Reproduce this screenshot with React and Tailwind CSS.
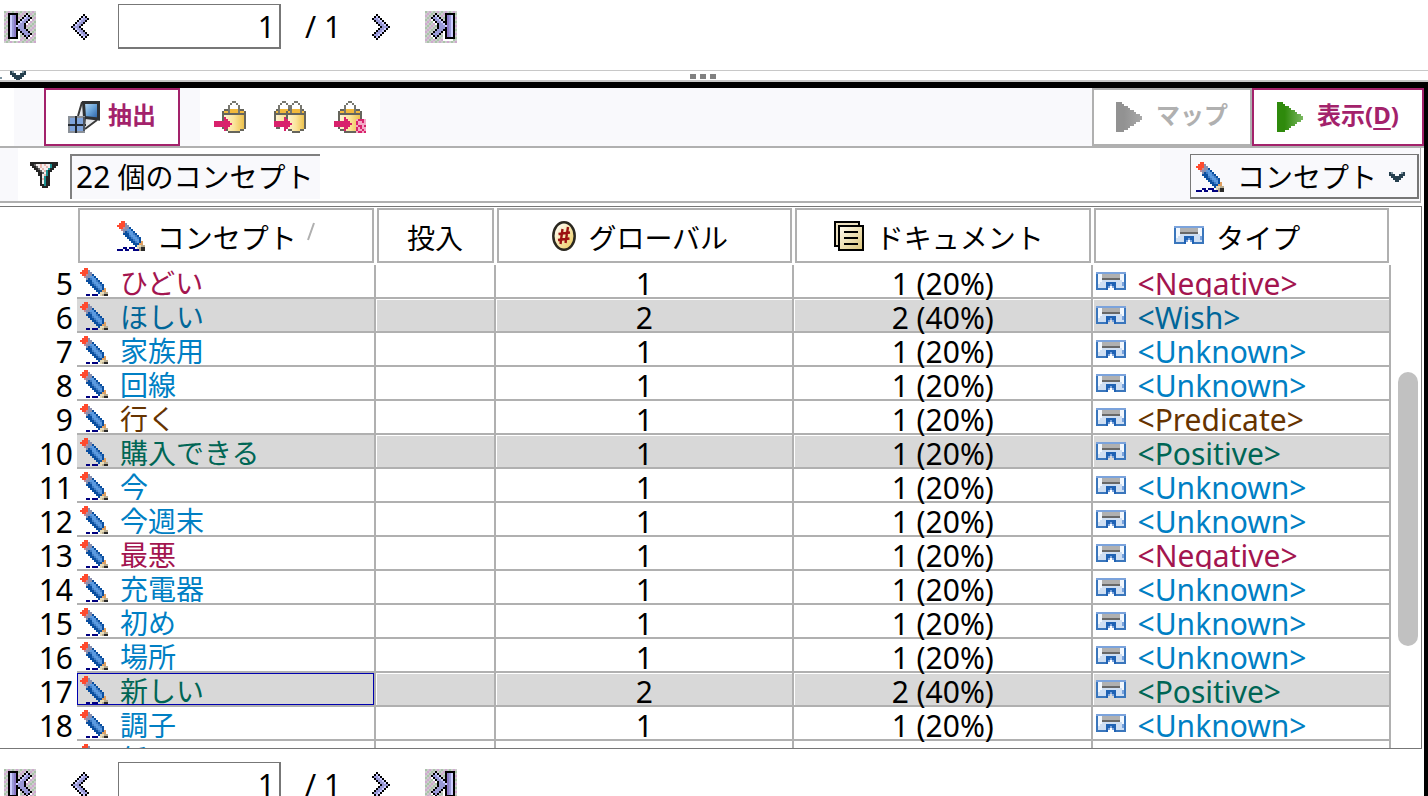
import React from "react";

const PALETTES = {
  nav: { "#": "#000000", l: "#ccccff", o: "#9999d6", d: "#8c7ac8", w: "#ffffff" },
  pencil: {
    r: "#ff4a2e", s: "#f57a5c", g: "#8890b0", h: "#c08a98", b: "#0a4fa0", l: "#5b9ae0", m: "#3f7cc4",
    o: "#e0a060", c: "#e8dcb8", y: "#b8ac90", k: "#2a2a2a", n: "#000080",
  },
  type: {
    m: "#7ba3dc", b: "#3a76bc", w: "#f2f7fd", l: "#cfdff3", g: "#b0b0b0", k: "#686868", d: "#1f62b4",
  },
  funnel: { k: "#242424", g: "#666666", w: "#f4eeee", p: "#e8b8b0", t: "#1a9090" },
  caret: { k: "#26404f", g: "#7d93a0" },
};

function PixelArt({ rows, palette, className }) {
  const colors = PALETTES[palette];
  const width = Math.max(...rows.map((r) => r.length));
  return (
    <svg
      viewBox={`0 0 ${width} ${rows.length}`}
      width={width * 2}
      height={rows.length * 2}
      className={className}
      shapeRendering="crispEdges"
      aria-hidden="true"
    >
      {rows.flatMap((row, y) =>
        [...row].map((c, x) =>
          colors[c] ? <rect key={`${x}-${y}`} x={x} y={y} width="1" height="1" fill={colors[c]} /> : null
        )
      )}
    </svg>
  );
}

const PENCIL = [
  "..rr..........",
  ".rrrg.........",
  "rrrrgg........",
  ".rrhggb.......",
  "..hggllb......",
  "...gbmllb.....",
  "...bbbllmb....",
  "....bbmllmb...",
  ".....bbmllmb..",
  "......bbmllb..",
  ".......bbmlbo.",
  "........bbboo.",
  ".........bccyy",
  "...nn.nnn.cykk",
  "nnn.nn..nnnykk",
];
const TYPE = [
  "mmmmmmmmmmmmmmm",
  "bwwgggggggggwwb",
  "bwwgggggggggwwb",
  "bwwkkkkkkkkkwwb",
  "bwwllllllllllwb",
  "bwllldddddlllmb",
  "bllllddmddlllmb",
  "blllldm.mdllllb",
  "bbbbbd...dbbbbb",
];
const FUNNEL = [
  "kkkkkkkkkkkkkk",
  "kkgwwpwpwwtkkk",
  ".kkgwpwwpwtkk.",
  "..kkgwpwwtkk..",
  "...kkgwptkk...",
  "....kkgwtk....",
  "....kkwptk....",
  ".....kwtkk....",
  ".....kptkk....",
  ".....kwtkk....",
  ".....kwtkk....",
  ".....kktkk....",
  "......kkk.....",
];
const CARET = ["kg....gk", "kkk..kkk", ".kkkkkk.", "..kkkk..", "...kk..."];
const LEFT_HALF = [
  "......#..",
  ".....#l#.",
  "....#loo#",
  "...#loo#.",
  "..#loo#..",
  ".#loo#...",
];
const CHEVRON_LEFT = [...LEFT_HALF, "#ooo#....", ...[...LEFT_HALF].reverse()];
const CHEVRON_RIGHT = CHEVRON_LEFT.map((r) => [...r].reverse().join(""));
const FIRST = [
  "................",
  "..#####....#....",
  "..#lod#...#l#...",
  "..#lod#..#loo#..",
  "..#lod#.#loo#w..",
  "..#lod##loo#w...",
  "..#lod#loo#w....",
  "..#lodlooo#.....",
  "..#lod#ooo#.....",
  "..#lod##ooo#....",
  "..#lod#w#ooo#...",
  "..#lod#w.#ooo#..",
  "..#lod#w..#o#w..",
  "..#####w...#w...",
  "...wwwww........",
  "................",
];
const LAST = FIRST.map((r) => `.${[...r].reverse().join("")}`.slice(0, 16));

function EdgeIcon({ rows }) {
  return (
    <span className="relative block h-8 w-8">
      <svg viewBox="0 0 16 16" className="h-8 w-8" shapeRendering="crispEdges" aria-hidden="true">
        <rect width="16" height="16" fill="#cccccc" />
        {Array.from({ length: 128 }, (_, i) => {
          const y = Math.floor(i / 8);
          const x = (i % 8) * 2 + (y % 2);
          return <rect key={i} x={x} y={y} width="1" height="1" fill={(x + y) % 4 ? "#cfa9cf" : "#a9c4a9"} />;
        })}
      </svg>
      <PixelArt rows={rows} palette="nav" className="absolute inset-0" />
    </span>
  );
}

function Pager({ id }) {
  return (
    <nav aria-label="ページ" className="flex items-center pl-1 font-['Noto_Sans',sans-serif] text-[30px] leading-10">
      <button type="button" aria-label="最初のページ">
        <EdgeIcon rows={FIRST} />
      </button>
      <button type="button" aria-label="前のページ" className="ml-7 flex w-8 justify-center">
        <PixelArt rows={CHEVRON_LEFT} palette="nav" />
      </button>
      <input
        id={id}
        aria-label="ページ番号"
        defaultValue="1"
        className="ml-[22px] h-[45px] w-[163px] border border-r-2 border-b-2 border-[#777777] bg-white pr-1 text-right outline-none"
      />
      <span className="ml-6 w-10 whitespace-pre">/ 1</span>
      <button type="button" aria-label="次のページ" className="ml-5 flex w-8 justify-center">
        <PixelArt rows={CHEVRON_RIGHT} palette="nav" />
      </button>
      <button type="button" aria-label="最後のページ" className="ml-7">
        <EdgeIcon rows={LAST} />
      </button>
    </nav>
  );
}

function ExtractIcon() {
  return (
    <svg viewBox="0 0 32 32" className="h-8 w-8" aria-hidden="true">
      <defs>
        <linearGradient id="screen" x1="0" y1="0" x2="1" y2="1">
          <stop offset="0" stopColor="#c4e2f6" />
          <stop offset="0.5" stopColor="#69a3d8" />
          <stop offset="1" stopColor="#2358a0" />
        </linearGradient>
      </defs>
      <path d="M14 1 10 15l6 1 1 11 12-8z" fill="#e6e8ec" />
      <path d="M14 1 10 15M29 19 17 28M17 17l-1 10" stroke="#3a3a3a" strokeWidth="2" fill="none" />
      <path d="M15.500 1.500h15v16.500l-14-1.500z" fill="url(#screen)" stroke="#2f3133" strokeWidth="3" />
      <path d="M0 15h17v17H0z" fill="#8a9098" />
      <path d="M2 17h5v6H2zM9 17h6v6H9zM2 25h5v5H2zM9 25h6v5H9z" fill="#7fa4dc" />
      <path d="M8 15v17M0 24h18" stroke="#222831" strokeWidth="2" />
      <path d="M16 16v14" stroke="#4d535c" strokeWidth="2" />
    </svg>
  );
}

function BagIcon({ kind }) {
  const bag = (x, w) => (
    <g>
      <path d={`M${x} 5h${w}v9h-2v1h-${w - 4}v-1h-2z`} fill="url(#gold)" />
      <path d={`M${x + 1} 4h${w - 2}v2h-${w - 2}z`} fill="#f2b93c" />
      <path
        d={`M${x} 5h1v9h-1zM${x + w - 1} 5h1v9h-1zM${x + 1} 4h2v1h-2zM${x + w - 3} 4h2v1h-2zM${x + 1} 6h${w - 2}v1h-${w - 2}zM${x + 1} 14h2v1h-2zM${x + w - 3} 14h2v1h-2zM${x + 3} 15h${w - 6}v1h-${w - 6}z`}
        fill="#66655c"
      />
      <path
        d={`M${x + w / 2 - 1} 0h2v1h-2zM${x + w / 2 - 2} 1h1v1h-1zM${x + w / 2 + 1} 1h1v1h-1zM${x + w / 2 - 3} 2h1v4h-1zM${x + w / 2 + 2} 2h1v4h-1z`}
        fill="#77776f"
      />
    </g>
  );
  return (
    <svg viewBox="0 0 16 16" className="h-8 w-8" shapeRendering="crispEdges" aria-hidden="true">
      <defs>
        <linearGradient id="gold" x1="0" x2="1">
          <stop offset="0" stopColor="#fdf6de" />
          <stop offset="0.5" stopColor="#fbe49a" />
          <stop offset="1" stopColor="#e9b93c" />
        </linearGradient>
      </defs>
      {kind === "double" && (
        <g>
          {bag(0, 10)}
          <path d="M0 13h8v3H0z" fill="#fff" />
          <path d="M1 13h2v1H1z" fill="#66655c" />
        </g>
      )}
      {kind === "double" ? bag(6, 10) : bag(kind === "amp" ? 2 : 4, 12)}
      <path d="M0 10h5V8h1v1h1v1h1v1h1v1H8v1H7v1H6v1H5v-2H0z" fill="#d8226c" />
      {kind === "amp" && (
        <g>
          <path d="M11 9h5v7h-5z" fill="#f3a9c6" />
          <path d="M12 9h3v1h-3zM11 10h1v2h-1zM14 10h1v1h-1zM12 12h2v1h-2zM11 13h1v2h-1zM13 13h1v1h-1zM15 12h1v1h-1zM14 14h1v1h-1zM12 15h2v1h-2zM15 15h1v1h-1z" fill="#d8226c" />
        </g>
      )}
    </svg>
  );
}

function PlayIcon({ id, from, to }) {
  return (
    <svg viewBox="0 0 13 15" className="h-[30px] w-[26px] shrink-0" shapeRendering="crispEdges" aria-hidden="true">
      <defs>
        <linearGradient id={id} x1="0" x2="1">
          <stop offset="0.3" stopColor={from} />
          <stop offset="1" stopColor={to} />
        </linearGradient>
      </defs>
      <path d="M0 0h3v1h1v1h2v1h1v1h2v1h1v1h2v1h1v2h-1v1h-2v1H9v1H7v1H6v1H4v1H0z" fill={`url(#${id})`} />
    </svg>
  );
}

function CoinIcon() {
  return (
    <svg viewBox="0 0 24 30" className="h-[30px] w-6" aria-hidden="true">
      <defs>
        <linearGradient id="coin" x1="0" y1="0" x2="1" y2="1">
          <stop offset="0.2" stopColor="#fdf8e8" />
          <stop offset="1" stopColor="#ecc850" />
        </linearGradient>
      </defs>
      <ellipse cx="12" cy="15" rx="10.7" ry="13.7" fill="url(#coin)" stroke="#2b2820" strokeWidth="2.5" />
      <path d="M10.5 8 8.5 23M16 6l-2.5 16M6.500 13l11.500-1.500M6 19l11.500-1.500" stroke="#9c1010" strokeWidth="2.4" fill="none" />
    </svg>
  );
}

function DocsIcon() {
  return (
    <svg viewBox="0 0 15 15" className="h-[30px] w-[30px]" shapeRendering="crispEdges" aria-hidden="true">
      <defs>
        <linearGradient id="paper" x1="0" y1="0" x2="1" y2="1">
          <stop offset="0" stopColor="#fdf9ec" />
          <stop offset="1" stopColor="#dcc67c" />
        </linearGradient>
      </defs>
      <path d="M0 0h13v13H0z" fill="#000" />
      <path d="M1 1h11v11H1z" fill="#ece0c0" />
      <path d="M2 2h13v13H2z" fill="#000" />
      <path d="M3 3h11v11H3z" fill="url(#paper)" />
      <path d="M5 5h7v1H5zM5 8h7v1H5zM5 11h7v1H5z" fill="#000" />
    </svg>
  );
}

const TYPE_COLORS = {
  Negative: "text-[#a3154f]",
  Wish: "text-[#006699]",
  Unknown: "text-[#007fc4]",
  Predicate: "text-[#663300]",
  Positive: "text-[#006655]",
};

const ROWS = [
  [5, "ひどい", 1, "20%", "Negative"],
  [6, "ほしい", 2, "40%", "Wish"],
  [7, "家族用", 1, "20%", "Unknown"],
  [8, "回線", 1, "20%", "Unknown"],
  [9, "行く", 1, "20%", "Predicate"],
  [10, "購入できる", 1, "20%", "Positive"],
  [11, "今", 1, "20%", "Unknown"],
  [12, "今週末", 1, "20%", "Unknown"],
  [13, "最悪", 1, "20%", "Negative"],
  [14, "充電器", 1, "20%", "Unknown"],
  [15, "初め", 1, "20%", "Unknown"],
  [16, "場所", 1, "20%", "Unknown"],
  [17, "新しい", 2, "40%", "Positive"],
  [18, "調子", 1, "20%", "Unknown"],
  [19, "低い", 1, "20%", "Unknown"],
];
const SELECTED = [6, 10, 17];

function HeaderCell({ icon, children }) {
  return (
    <th scope="col" className="p-0 pt-px pr-0.5 pb-0.5 pl-px font-normal">
      <div
        className={`flex h-[55px] items-center justify-center gap-3 border-2 border-[#b0b0b0] bg-white text-[28px] leading-10 ${
          icon ? "pr-2" : ""
        }`}
      >
        {icon}
        <span className="flex gap-2.5 pt-1">{children}</span>
      </div>
    </th>
  );
}

function ConceptTable() {
  const line = "border-r-2 border-b-2 border-[#b0b0b0] p-0";
  return (
    <table className="w-full table-fixed border-separate border-spacing-0">
      <colgroup>
        <col className="w-[77px]" />
        <col />
        <col className="w-[120px]" />
        <col />
        <col />
        <col />
      </colgroup>
      <thead>
        <tr>
          <td className="p-0" />
          <HeaderCell icon={<PixelArt rows={PENCIL} palette="pencil" />}>
            コンセプト
            <svg viewBox="0 0 20 20" className="mt-1 h-5 w-5" aria-hidden="true">
              <path d="M1 18 7 1" stroke="#b0b0b0" strokeWidth="2" />
            </svg>
          </HeaderCell>
          <HeaderCell>投入</HeaderCell>
          <HeaderCell icon={<CoinIcon />}>グローバル</HeaderCell>
          <HeaderCell icon={<DocsIcon />}>ドキュメント</HeaderCell>
          <HeaderCell icon={<PixelArt rows={TYPE} palette="type" className="-mt-0.5" />}>タイプ</HeaderCell>
        </tr>
      </thead>
      <tbody className="font-['Noto_Sans',sans-serif] text-[30px] leading-9">
        {ROWS.map(([n, concept, count, share, type]) => {
          const fill = SELECTED.includes(n) ? "bg-[#d8d8d8]" : "bg-white";
          const cell = `h-8 border-t border-l border-white ${fill}`;
          return (
            <tr key={n}>
              <th scope="row" className="p-0 pr-1 text-right font-normal">
                <div className="h-8">{n}</div>
              </th>
              <td className={line}>
                <div
                  className={`flex h-8 items-start gap-3 overflow-hidden border pl-0.5 ${fill} ${
                    n === 17 ? "border-[#0000b0]" : "border-transparent"
                  } ${TYPE_COLORS[type]}`}
                >
                  <PixelArt rows={PENCIL} palette="pencil" className="mt-0.5 shrink-0" />
                  <span className="font-['Noto_Sans_CJK_JP',sans-serif] text-[28px] leading-8">{concept}</span>
                </div>
              </td>
              <td className={line}>
                <div className={cell} />
              </td>
              <td className={line}>
                <div className={`${cell} text-center`}>{count}</div>
              </td>
              <td className={line}>
                <div className={`${cell} text-center`}>{`${count} (${share})`}</div>
              </td>
              <td className={line}>
                <div className={`${cell} flex items-start gap-3 overflow-hidden pl-0.5 ${TYPE_COLORS[type]}`}>
                  <PixelArt rows={TYPE} palette="type" className="mt-1.5 shrink-0" />
                  <span>{`<${type}>`}</span>
                </div>
              </td>
            </tr>
          );
        })}
      </tbody>
    </table>
  );
}

function Splitter() {
  return (
    <div className="flex h-3 shrink-0 items-start border-t border-b-2 border-[#c8c8c8] bg-white">
      <div className="flex h-[9px] w-9 items-start gap-2 overflow-hidden">
        <span className="mt-1.5 h-0.5 w-0.5 shrink-0 bg-[#7d93a0]" />
        <PixelArt rows={CARET} palette="caret" className="shrink-0" />
      </div>
      <div className="flex flex-1 justify-center gap-1 pt-[3px] pr-[58px]">
        <span className="h-[5px] w-1.5 bg-[#808080]" />
        <span className="h-[5px] w-1.5 bg-[#808080]" />
        <span className="h-[5px] w-1.5 bg-[#808080]" />
      </div>
    </div>
  );
}

export default function App() {
  const plainButton = "flex w-[60px] items-center justify-center bg-white";
  return (
    <div className="flex h-screen flex-col overflow-hidden bg-white font-['Noto_Sans','Noto_Sans_CJK_JP',sans-serif] text-black">
      <div className="h-[70px] shrink-0 pt-1">
        <Pager id="page-top" />
      </div>
      <Splitter />
      <div className="flex min-h-0 flex-1 flex-col border-t-[6px] border-r-4 border-black">
        <div className="flex h-[60px] shrink-0 border-b-2 border-[#b0b0b0] bg-[#f9f9fc] text-2xl font-bold">
          <div className="w-3.5 bg-white" />
          <button
            type="button"
            className="ml-[30px] flex w-[136px] items-center justify-center gap-2 border-2 border-[#a3226b] bg-white text-[#a3226b]"
          >
            <ExtractIcon />
            <span className="-mt-1">抽出</span>
          </button>
          <div className="ml-5 flex">
            <button type="button" aria-label="追加" className={plainButton}>
              <BagIcon kind="single" />
            </button>
            <button type="button" aria-label="すべて追加" className={plainButton}>
              <BagIcon kind="double" />
            </button>
            <button type="button" aria-label="条件追加" className={plainButton}>
              <BagIcon kind="amp" />
            </button>
          </div>
          <button
            type="button"
            disabled
            className="ml-auto flex w-40 items-center justify-center gap-3.5 border-2 border-[#b0b0b0] bg-white text-[#b0b0b0]"
          >
            <PlayIcon id="play-off" from="#929292" to="#a8a8a8" />
            <span className="-mt-1">マップ</span>
          </button>
          <button
            type="button"
            className="flex w-[172px] items-center justify-center gap-3.5 border-2 border-[#a3226b] bg-white text-[#a3226b]"
          >
            <PlayIcon id="play-on" from="#2f8a0c" to="#7ab860" />
            <span className="-mt-1">
              表示(<u className="decoration-2 underline-offset-4">D</u>)
            </span>
          </button>
        </div>

        <div className="mr-[3px] flex h-[55px] shrink-0 items-stretch border-r border-b-2 border-[#b0b0b0] text-[28px]">
          <div className="w-[18px] bg-[#f9f9fc]" />
          <div className="flex w-[52px] items-center justify-center">
            <PixelArt rows={FUNNEL} palette="funnel" />
          </div>
          <div className="mt-1.5 mb-0.5 w-[250px] border-t-2 border-l-2 border-[#808080] bg-[#f9f9fc] pl-1 leading-[42px]">
            <span className="text-[30px]">22</span> 個のコンセプト
          </div>
          <div className="ml-auto flex items-start bg-[#f9f9fc] pt-1.5 pr-px pl-[30px]">
            <div className="relative">
              <select
                aria-label="表示"
                className="h-[45px] w-[229px] appearance-none border border-r-2 border-b-2 border-[#777777] bg-[#f9f9fc] pt-0.5 pl-[46px] leading-10 outline-none"
              >
                <option>コンセプト</option>
              </select>
              <PixelArt rows={PENCIL} palette="pencil" className="pointer-events-none absolute top-2 left-1.5" />
              <PixelArt rows={CARET} palette="caret" className="pointer-events-none absolute top-[18px] right-3.5" />
            </div>
          </div>
        </div>

        <div className="mt-[3px] mr-0.5 flex min-h-0 flex-1 overflow-hidden border-t border-r border-b border-[#777777]">
          <div className="min-w-0 flex-1 overflow-hidden">
            <ConceptTable />
          </div>
          <div className="flex w-[30px] flex-col items-end pr-[3px]">
            <div className="flex-[165]" />
            <div className="w-5 flex-[274] rounded-full bg-[#c1c1c1]" />
            <div className="flex-[102]" />
          </div>
        </div>

        <div className="h-[47px] shrink-0 overflow-hidden pt-[13px]">
          <Pager id="page-bottom" />
        </div>
      </div>
    </div>
  );
}
